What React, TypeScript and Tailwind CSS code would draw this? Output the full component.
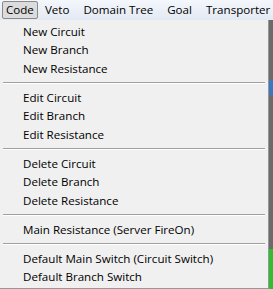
import React from "react";

const groups: string[][] = [
  ["New Circuit", "New Branch", "New Resistance"],
  ["Edit Circuit", "Edit Branch", "Edit Resistance"],
  ["Delete Circuit", "Delete Branch", "Delete Resistance"],
  ["Main Resistance (Server FireOn)"],
  ["Default Main Switch (Circuit Switch)", "Default Branch Switch"],
];

const topMenus = ["Veto", "Domain Tree", "Goal", "Transporter"];

export default function App() {
  return (
    <div
      className="w-[273px] h-[289px] overflow-hidden bg-[#f0f0f0] text-[11.6px] text-black"
      style={{ fontFamily: '"Segoe UI", "Open Sans", "Noto Sans", sans-serif' }}
    >
      {/* menu bar */}
      <div className="h-[20px] flex items-center bg-gradient-to-b from-[#f4f7fc] to-[#e3e9f3] whitespace-nowrap">
        <div className="ml-[2px] h-[18px] px-[3px] flex items-center border border-[#8a8a8a] rounded-[2px] bg-[#dcdcdc]">
          Code
        </div>
        <div className="w-[2px]" />
        {topMenus.map((m) => (
          <div key={m} className="px-[7px] h-[18px] flex items-center">
            {m}
          </div>
        ))}
      </div>

      <div className="flex h-[269px]">
        {/* dropdown */}
        <div className="w-[269px] h-full border-r border-b border-[#979797] bg-[#f0f0f0] pt-[2px]">
          {groups.map((g, i) => (
            <div key={i}>
              {i > 0 && (
                <div className="mx-[3px] mt-[4.5px] mb-[4px] h-[2px] border-t border-[#a0a0a0] border-b-white border-b" />
              )}
              {g.map((item) => (
                <div key={item} className="h-[18.5px] pl-[23px] flex items-center whitespace-nowrap">
                  {item}
                </div>
              ))}
            </div>
          ))}
        </div>
        {/* background sliver */}
        <div className="flex-1 bg-[#6b6b6b] flex flex-col">
          <div className="h-[60px]" />
          <div className="h-[15px] bg-[#3a78c2]" />
          <div className="flex-1" />
          <div className="h-[40px] bg-[#2dbf2d]" />
        </div>
      </div>
    </div>
  );
}
